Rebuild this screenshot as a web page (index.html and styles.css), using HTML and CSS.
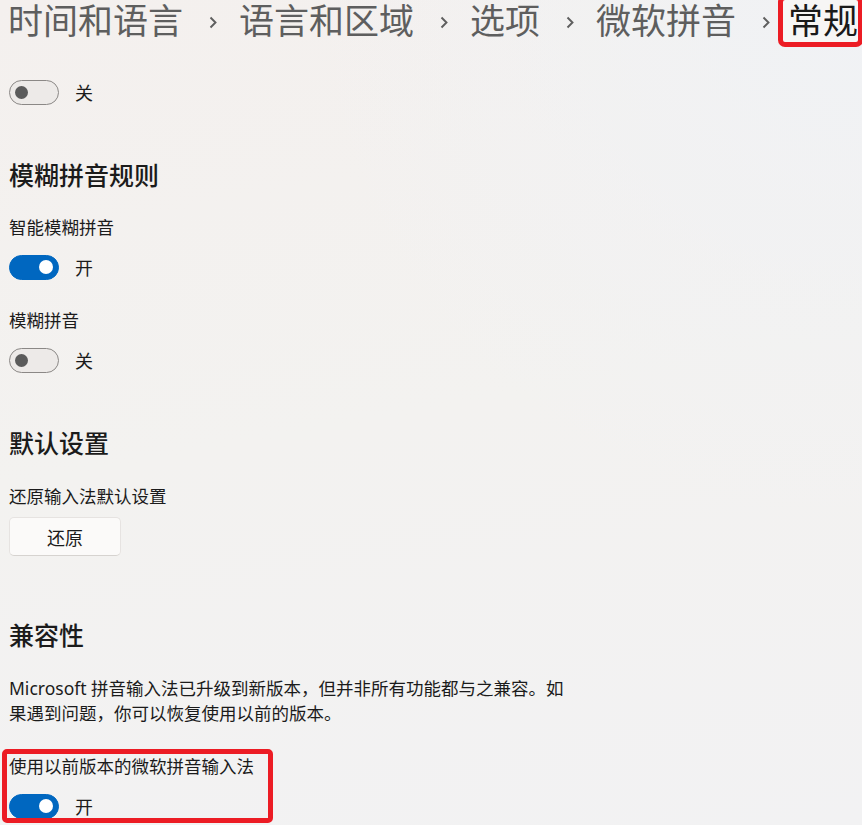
FILE: index.html
```html
<!DOCTYPE html>
<html lang="zh-CN">
<head>
  <meta charset="UTF-8" />
  <meta name="viewport" content="width=device-width, initial-scale=1.0"/>
  <title>常规</title>
  <link rel="stylesheet" href="styles.css">
</head>
<body>
  <header class="breadcrumb">
    <span class="crumb">时间和语言</span>
    <svg class="chevron" viewBox="0 0 8 12"><path d="M1.5 1 L6.5 6 L1.5 11" /></svg>
    <span class="crumb">语言和区域</span>
    <svg class="chevron" viewBox="0 0 8 12"><path d="M1.5 1 L6.5 6 L1.5 11" /></svg>
    <span class="crumb">选项</span>
    <svg class="chevron" viewBox="0 0 8 12"><path d="M1.5 1 L6.5 6 L1.5 11" /></svg>
    <span class="crumb">微软拼音</span>
    <svg class="chevron" viewBox="0 0 8 12"><path d="M1.5 1 L6.5 6 L1.5 11" /></svg>
    <span class="crumb current">常规</span>
  </header>

  <main class="page">
    <div class="toggle-row first">
      <span class="toggle"></span>
      <span class="state">关</span>
    </div>

    <section class="group">
      <h2>模糊拼音规则</h2>
      <div class="setting">
        <div class="label">智能模糊拼音</div>
        <div class="toggle-row">
          <span class="toggle on"></span>
          <span class="state">开</span>
        </div>
      </div>
      <div class="setting">
        <div class="label">模糊拼音</div>
        <div class="toggle-row">
          <span class="toggle"></span>
          <span class="state">关</span>
        </div>
      </div>
    </section>

    <section class="group">
      <h2>默认设置</h2>
      <div class="setting tight">
        <div class="label">还原输入法默认设置</div>
        <button class="btn">还原</button>
      </div>
    </section>

    <section class="group wide">
      <h2>兼容性</h2>
      <p class="desc">Microsoft 拼音输入法已升级到新版本，但并非所有功能都与之兼容。如果遇到问题，你可以恢复使用以前的版本。</p>
      <div class="setting marked">
        <div class="label">使用以前版本的微软拼音输入法</div>
        <div class="toggle-row">
          <span class="toggle on"></span>
          <span class="state">开</span>
        </div>
        <div class="highlight"></div>
      </div>
    </section>
  </main>
</body>
</html>
```

FILE: styles.css
```css
html, body {
  height: 100%;
}
body {
  margin: 0;
  overflow: hidden;
  font-family: "Noto Sans", "Noto Sans CJK SC", sans-serif;
  color: #1b1b1b;
  background:
    radial-gradient(ellipse at 100% 0%, #f0f2f5 0%, rgba(240,242,245,0) 45%),
    linear-gradient(170deg, #f4f0ee 0%, #f3f2f0 50%, #f2f2f3 100%);
}
.breadcrumb {
  display: flex;
  align-items: center;
  height: 42px;
  padding-left: 8px;
  font-size: 35px;
  line-height: 42px;
  color: #5e5e5e;
  white-space: nowrap;
}
.chevron {
  flex: none;
  width: 8px;
  height: 13px;
  margin: 3px 22px 0 26px;
  fill: none;
  stroke: #5e5e5e;
  stroke-width: 1.9;
}
.crumb.current {
  color: #1a1a1a;
  padding-left: 5px;
  margin-left: -9px;
  outline: 5px solid #ec1c24;
  border-radius: 2px;
  background: #f7f6f5;
}
.page {
  padding-left: 9px;
}
.toggle-row {
  display: flex;
  align-items: center;
  height: 26px;
  gap: 16px;
  font-size: 18px;
}
.toggle-row.first {
  margin-top: 37px;
}
.toggle {
  position: relative;
  box-sizing: border-box;
  width: 50px;
  height: 25px;
  border-radius: 13px;
  border: 1px solid #8b8886;
  background: #edeae8;
}
.toggle::after {
  content: "";
  position: absolute;
  left: 5px;
  top: 5px;
  width: 13px;
  height: 13px;
  border-radius: 50%;
  background: #5b5b5b;
}
.toggle.on {
  border-color: #0067c0;
  background: #0067c0;
}
.toggle.on::after {
  left: auto;
  right: 5px;
  top: 4.5px;
  width: 14px;
  height: 14px;
  background: #ffffff;
}
.group {
  margin-top: 53px;
}
.group.wide {
  margin-top: 62px;
}
h2 {
  margin: 0;
  font-size: 25px;
  line-height: 34px;
  font-weight: 500;
}
.setting {
  display: flex;
  flex-direction: column;
  gap: 14px;
  margin-top: 22px;
}
.setting + .setting {
  margin-top: 27px;
}
.setting.tight {
  gap: 8px;
  margin-top: 23px;
}
.label {
  font-size: 17.5px;
  line-height: 26px;
}
.btn {
  width: 112px;
  height: 39px;
  font-family: inherit;
  font-size: 18px;
  color: #1b1b1b;
  background: #fbfaf9;
  border: 1px solid #e6e3e1;
  border-bottom-color: #d6d3d0;
  border-radius: 5px;
}
.desc {
  max-width: 565px;
  margin: 24px 0 0;
  font-size: 17.5px;
  line-height: 25px;
}
.setting.marked {
  position: relative;
  margin-top: 27px;
}
.highlight {
  position: absolute;
  left: -7px;
  top: -4px;
  width: 271px;
  height: 74px;
  box-sizing: border-box;
  border: 5px solid #ec1c24;
  border-radius: 5px;
}
```
